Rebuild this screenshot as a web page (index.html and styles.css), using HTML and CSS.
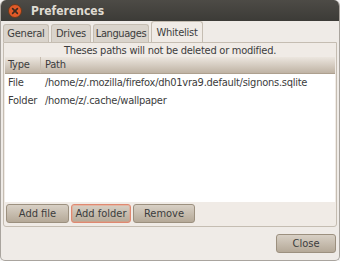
FILE: index.html
```html
<!DOCTYPE html>
<html>
<head>
<meta charset="utf-8">
<link rel="stylesheet" href="styles.css">
</head>
<body>
<div class="window">
  <div class="titlebar">
    <span class="close-btn"><svg width="14" height="14" viewBox="0 0 14 14"><circle cx="7" cy="7" r="6.5" fill="#e05a28" stroke="#6b3a1c" stroke-width="1"/><path d="M4.6 4.6 L9.4 9.4 M9.4 4.6 L4.6 9.4" stroke="#3b2a20" stroke-width="1.6" stroke-linecap="round"/></svg></span>
    <span class="title">Preferences</span>
  </div>
  <div class="body">
    <div class="tabs">
      <div class="tab t-general">General</div>
      <div class="tab t-drives">Drives</div>
      <div class="tab t-lang">Languages</div>
      <div class="tab active t-white">Whitelist</div>
    </div>
    <div class="frame">
      <div class="notice">Theses paths will not be deleted or modified.</div>
      <div class="list">
        <div class="header">
          <div class="col-type">Type</div>
          <div class="col-path">Path</div>
        </div>
        <div class="row"><div class="col-type">File</div><div class="col-path">/home/z/.mozilla/firefox/dh01vra9.default/signons.sqlite</div></div>
        <div class="row"><div class="col-type">Folder</div><div class="col-path">/home/z/.cache/wallpaper</div></div>
      </div>
      <div class="buttons">
        <button class="btn w-file">Add file</button>
        <button class="btn focus w-folder">Add folder</button>
        <button class="btn w-remove">Remove</button>
      </div>
    </div>
    <div class="footer">
      <button class="btn close">Close</button>
    </div>
  </div>
</div>
</body>
</html>
```
FILE: styles.css
```css
html, body { margin: 0; padding: 0; background: #f2f1f0; }
body { font-family: "DejaVu Sans Condensed", "DejaVu Sans", sans-serif; font-size: 11px; letter-spacing: -0.25px; color: #3c3c3c; }
.window { width: 340px; height: 261px; box-sizing: border-box; display: flex; flex-direction: column; background: #efebe7; border-radius: 6px 6px 5px 5px; overflow: hidden; border: 1px solid #a9a49e; border-top: none; }
.titlebar { height: 21px; background: linear-gradient(#4d4b46, #3c3b37); display: flex; align-items: center; padding-left: 7px; gap: 9px; }
.close-btn { display: flex; }
.title { color: #dfdbd2; font-weight: bold; font-size: 12px; letter-spacing: 0; }
.body { flex: 1; display: flex; flex-direction: column; padding: 0 2px 0 2px; }
.tabs { display: flex; gap: 2px; height: 21px; align-items: flex-end; }
.tab { height: 18px; padding: 0; box-sizing: border-box; text-align: center; white-space: nowrap; background: #dad4cc; border: 1px solid #c5bdb2; border-bottom: none; border-radius: 3px 3px 0 0; line-height: 18px; }
.t-general { width: 46px; }
.t-drives { width: 40px; }
.t-lang { width: 56px; letter-spacing: -0.4px; }
.t-white { width: 52px; }
.tab.active { height: 21px; background: #f0ebe6; line-height: 21px; }
.frame { height: 180px; border: 1px solid #c5bdb2; border-radius: 0 0 3px 3px; background: #f0ebe6; display: flex; flex-direction: column; padding: 0 1px 3px 1px; }
.notice { text-align: center; height: 14px; line-height: 15px; }
.list { flex: 1; background: #fff; }
.header { display: flex; height: 16px; line-height: 16px; background: linear-gradient(#ece6df, #bfb3a4); border-bottom: 1px solid #ada08f; }
.header .col-type { border-right: 1px solid #c8bdb0; }
.row { display: flex; height: 18px; line-height: 18px; }
.col-type { width: 36px; padding-left: 3px; box-sizing: border-box; }
.col-path { padding-left: 4px; }
.buttons { display: flex; gap: 2px; padding: 2px 1px 0; }
.btn { font: inherit; color: #3c3c3c; height: 19px; padding: 0; background: linear-gradient(#d8d0c5, #b5a998); border: 1px solid #9c907f; border-radius: 3px; }
.w-file { width: 63px; }
.w-folder { width: 60px; }
.w-remove { width: 62px; }
.btn.focus { border-color: #e08870; box-shadow: inset 0 0 0 1px rgba(240,150,120,.4); }
.footer { flex: 1; display: flex; justify-content: flex-end; align-items: center; padding-right: 1px; padding-bottom: 1px; }
.btn.close { width: 60px; }
```
